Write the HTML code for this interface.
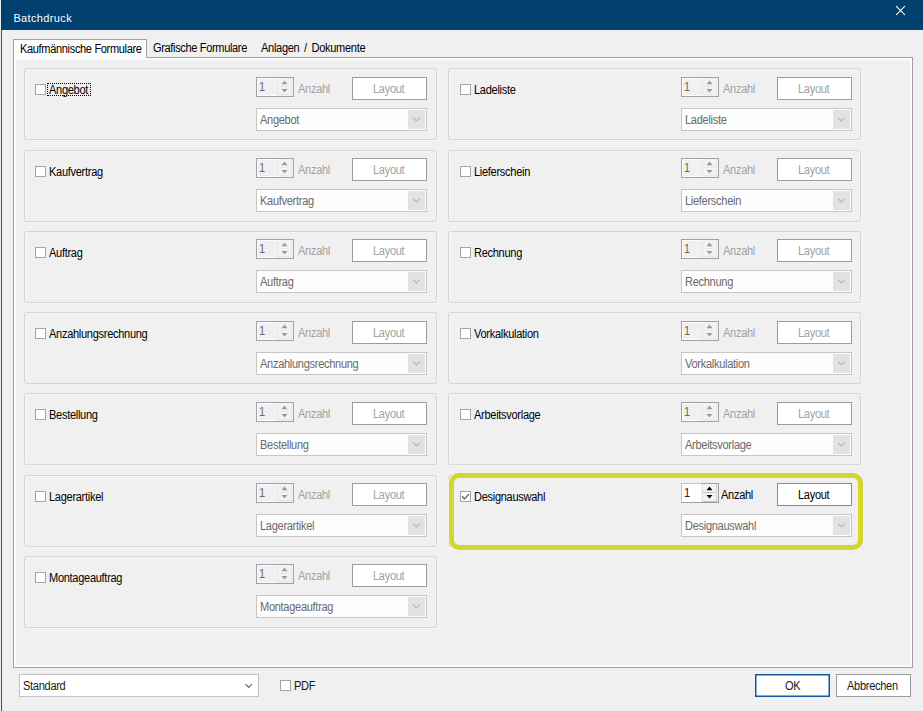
<!DOCTYPE html>
<html lang="de"><head><meta charset="utf-8"><title>Batchdruck</title>
<style>
html,body{margin:0;padding:0}
body{width:923px;height:711px;overflow:hidden;background:#f0f0f0;position:relative;font-family:"Liberation Sans",sans-serif;font-size:11px;color:#000}
div,span{box-sizing:border-box}
.a{position:absolute}
.t{position:absolute;white-space:nowrap;font-size:12px;line-height:14px;height:14px;transform:scaleX(.92);letter-spacing:-.32px;transform-origin:0 0}
.g{position:absolute;border:1px solid #d5d5d5;border-radius:2.5px;box-shadow:inset 1px 1px 0 #f5f5f5, 1px 1px 0 #f5f5f5}
.cb{position:absolute;width:11px;height:11px;border:1px solid #a4a4a4;background:#fff}
.btn{position:absolute;border:1px solid #9c9c9c;background:#fff}
.cmb{position:absolute;border:1px solid #c6c6c6;background:#fdfdfd}
.dd{position:absolute;background:#e2e2e2}
.sp{position:absolute;border:1px solid #a2a2a6;background:#f0f0f0}
.dis{color:#a2a2a2}
.dim{color:#6a6a6a}
</style></head>
<body>
<div class="a" style="left:0;top:0;width:1px;height:711px;background:#ececec"></div>
<div class="a" style="left:1px;top:0;width:1px;height:711px;background:#15609f"></div>
<div class="a" style="left:1px;top:0;width:922px;height:30px;background:#01406f"></div>
<span class="t" style="left:13.4px;top:11px;color:#fff;font-size:11px;transform:none;letter-spacing:.36px">Batchdruck</span>
<svg class="a" style="left:894px;top:4px" width="14" height="14" viewBox="0 0 14 14"><path d="M2.4 2.4 L10.6 10.6 M10.6 2.4 L2.4 10.6" stroke="#fff" stroke-width="1.05" stroke-linecap="round" fill="none"/></svg>
<div class="a" style="left:13px;top:57px;width:900px;height:611px;border:1px solid #a2a2a2;background:#f0f0f0;box-shadow:inset 0 0 0 2px #fcfcfc"></div>
<div class="a" style="left:13px;top:39px;width:134px;height:19px;border:1px solid #a2a2a2;border-bottom:none;background:#fdfdfd"></div>
<span class="t" style="left:19.5px;top:42px;letter-spacing:-.37px">Kaufmännische Formulare</span>
<span class="t" style="left:153px;top:41px;letter-spacing:-.38px">Grafische Formulare</span>
<span class="t" style="left:261px;top:41px;word-spacing:2px">Anlagen / Dokumente</span>
<div class="g" style="left:24px;top:68px;width:413px;height:72px"></div>
<div class="cb" style="left:35px;top:84px"></div>
<div class="a" style="left:47px;top:83px;width:44px;height:13px;border:1px dotted #000"></div>
<span class="t" style="left:49.2px;top:83px">Angebot</span>
<div class="sp" style="left:256px;top:77px;width:38px;height:20px;box-shadow:inset 0 0 0 1px #fcfcfc"></div>
<div class="a" style="left:277px;top:78px;width:16px;height:18px;background:#f0f0f0"></div>
<div class="a" style="left:277px;top:79px;width:15px;height:8px;border:1px solid #e8e8e8;border-top-color:#f4f4f4;background:#f2f2f2"></div>
<div class="a" style="left:277px;top:87px;width:15px;height:8px;border:1px solid #e8e8e8;border-top-color:#f4f4f4;background:#f2f2f2"></div>
<svg class="a" style="left:279px;top:78px" width="11" height="16" viewBox="0 0 11 16"><path d="M2.55 6.2 L5.5 2.5 L8.45 6.2 Z M2.55 10.9 L5.5 14.6 L8.45 10.9 Z" fill="#9a9a9a"/></svg>
<span class="t dim" style="left:259.2px;top:80px;">1</span>
<span class="t dis" style="left:298px;top:82px">Anzahl</span>
<div class="btn" style="left:352px;top:77px;width:75px;height:23px"></div>
<span class="t dis" style="left:373.3px;top:82px">Layout</span>
<div class="cmb" style="left:256px;top:108px;width:171px;height:23px"></div>
<div class="dd" style="left:408px;top:110px;width:17px;height:19px"></div>
<svg class="a" style="left:411px;top:115px" width="11" height="9" viewBox="0 0 11 9"><path d="M2 2.6 L5.4 6 L8.8 2.6" stroke="#b4b4b4" stroke-width="1.15" fill="none"/></svg>
<span class="t dim" style="left:260px;top:113px">Angebot</span>
<div class="g" style="left:24px;top:150px;width:413px;height:72px"></div>
<div class="cb" style="left:35px;top:166px"></div>
<span class="t" style="left:49.2px;top:165px">Kaufvertrag</span>
<div class="sp" style="left:256px;top:158px;width:38px;height:20px;box-shadow:inset 0 0 0 1px #fcfcfc"></div>
<div class="a" style="left:277px;top:159px;width:16px;height:18px;background:#f0f0f0"></div>
<div class="a" style="left:277px;top:160px;width:15px;height:8px;border:1px solid #e8e8e8;border-top-color:#f4f4f4;background:#f2f2f2"></div>
<div class="a" style="left:277px;top:168px;width:15px;height:8px;border:1px solid #e8e8e8;border-top-color:#f4f4f4;background:#f2f2f2"></div>
<svg class="a" style="left:279px;top:159px" width="11" height="16" viewBox="0 0 11 16"><path d="M2.55 6.2 L5.5 2.5 L8.45 6.2 Z M2.55 10.9 L5.5 14.6 L8.45 10.9 Z" fill="#9a9a9a"/></svg>
<span class="t dim" style="left:259.2px;top:161px;">1</span>
<span class="t dis" style="left:298px;top:163px">Anzahl</span>
<div class="btn" style="left:352px;top:158px;width:75px;height:23px"></div>
<span class="t dis" style="left:373.3px;top:163px">Layout</span>
<div class="cmb" style="left:256px;top:189px;width:171px;height:23px"></div>
<div class="dd" style="left:408px;top:191px;width:17px;height:19px"></div>
<svg class="a" style="left:411px;top:196px" width="11" height="9" viewBox="0 0 11 9"><path d="M2 2.6 L5.4 6 L8.8 2.6" stroke="#b4b4b4" stroke-width="1.15" fill="none"/></svg>
<span class="t dim" style="left:260px;top:194px">Kaufvertrag</span>
<div class="g" style="left:24px;top:231px;width:413px;height:72px"></div>
<div class="cb" style="left:35px;top:247px"></div>
<span class="t" style="left:49.2px;top:246px">Auftrag</span>
<div class="sp" style="left:256px;top:239px;width:38px;height:20px;box-shadow:inset 0 0 0 1px #fcfcfc"></div>
<div class="a" style="left:277px;top:240px;width:16px;height:18px;background:#f0f0f0"></div>
<div class="a" style="left:277px;top:241px;width:15px;height:8px;border:1px solid #e8e8e8;border-top-color:#f4f4f4;background:#f2f2f2"></div>
<div class="a" style="left:277px;top:249px;width:15px;height:8px;border:1px solid #e8e8e8;border-top-color:#f4f4f4;background:#f2f2f2"></div>
<svg class="a" style="left:279px;top:240px" width="11" height="16" viewBox="0 0 11 16"><path d="M2.55 6.2 L5.5 2.5 L8.45 6.2 Z M2.55 10.9 L5.5 14.6 L8.45 10.9 Z" fill="#9a9a9a"/></svg>
<span class="t dim" style="left:259.2px;top:242px;">1</span>
<span class="t dis" style="left:298px;top:244px">Anzahl</span>
<div class="btn" style="left:352px;top:239px;width:75px;height:23px"></div>
<span class="t dis" style="left:373.3px;top:244px">Layout</span>
<div class="cmb" style="left:256px;top:270px;width:171px;height:23px"></div>
<div class="dd" style="left:408px;top:272px;width:17px;height:19px"></div>
<svg class="a" style="left:411px;top:277px" width="11" height="9" viewBox="0 0 11 9"><path d="M2 2.6 L5.4 6 L8.8 2.6" stroke="#b4b4b4" stroke-width="1.15" fill="none"/></svg>
<span class="t dim" style="left:260px;top:275px">Auftrag</span>
<div class="g" style="left:24px;top:312px;width:413px;height:72px"></div>
<div class="cb" style="left:35px;top:328px"></div>
<span class="t" style="left:49.2px;top:327px">Anzahlungsrechnung</span>
<div class="sp" style="left:256px;top:321px;width:38px;height:20px;box-shadow:inset 0 0 0 1px #fcfcfc"></div>
<div class="a" style="left:277px;top:322px;width:16px;height:18px;background:#f0f0f0"></div>
<div class="a" style="left:277px;top:323px;width:15px;height:8px;border:1px solid #e8e8e8;border-top-color:#f4f4f4;background:#f2f2f2"></div>
<div class="a" style="left:277px;top:331px;width:15px;height:8px;border:1px solid #e8e8e8;border-top-color:#f4f4f4;background:#f2f2f2"></div>
<svg class="a" style="left:279px;top:322px" width="11" height="16" viewBox="0 0 11 16"><path d="M2.55 6.2 L5.5 2.5 L8.45 6.2 Z M2.55 10.9 L5.5 14.6 L8.45 10.9 Z" fill="#9a9a9a"/></svg>
<span class="t dim" style="left:259.2px;top:324px;">1</span>
<span class="t dis" style="left:298px;top:326px">Anzahl</span>
<div class="btn" style="left:352px;top:321px;width:75px;height:23px"></div>
<span class="t dis" style="left:373.3px;top:326px">Layout</span>
<div class="cmb" style="left:256px;top:352px;width:171px;height:23px"></div>
<div class="dd" style="left:408px;top:354px;width:17px;height:19px"></div>
<svg class="a" style="left:411px;top:359px" width="11" height="9" viewBox="0 0 11 9"><path d="M2 2.6 L5.4 6 L8.8 2.6" stroke="#b4b4b4" stroke-width="1.15" fill="none"/></svg>
<span class="t dim" style="left:260px;top:357px">Anzahlungsrechnung</span>
<div class="g" style="left:24px;top:393px;width:413px;height:72px"></div>
<div class="cb" style="left:35px;top:409px"></div>
<span class="t" style="left:49.2px;top:408px">Bestellung</span>
<div class="sp" style="left:256px;top:402px;width:38px;height:20px;box-shadow:inset 0 0 0 1px #fcfcfc"></div>
<div class="a" style="left:277px;top:403px;width:16px;height:18px;background:#f0f0f0"></div>
<div class="a" style="left:277px;top:404px;width:15px;height:8px;border:1px solid #e8e8e8;border-top-color:#f4f4f4;background:#f2f2f2"></div>
<div class="a" style="left:277px;top:412px;width:15px;height:8px;border:1px solid #e8e8e8;border-top-color:#f4f4f4;background:#f2f2f2"></div>
<svg class="a" style="left:279px;top:403px" width="11" height="16" viewBox="0 0 11 16"><path d="M2.55 6.2 L5.5 2.5 L8.45 6.2 Z M2.55 10.9 L5.5 14.6 L8.45 10.9 Z" fill="#9a9a9a"/></svg>
<span class="t dim" style="left:259.2px;top:405px;">1</span>
<span class="t dis" style="left:298px;top:407px">Anzahl</span>
<div class="btn" style="left:352px;top:402px;width:75px;height:23px"></div>
<span class="t dis" style="left:373.3px;top:407px">Layout</span>
<div class="cmb" style="left:256px;top:433px;width:171px;height:23px"></div>
<div class="dd" style="left:408px;top:435px;width:17px;height:19px"></div>
<svg class="a" style="left:411px;top:440px" width="11" height="9" viewBox="0 0 11 9"><path d="M2 2.6 L5.4 6 L8.8 2.6" stroke="#b4b4b4" stroke-width="1.15" fill="none"/></svg>
<span class="t dim" style="left:260px;top:438px">Bestellung</span>
<div class="g" style="left:24px;top:475px;width:413px;height:72px"></div>
<div class="cb" style="left:35px;top:491px"></div>
<span class="t" style="left:49.2px;top:490px">Lagerartikel</span>
<div class="sp" style="left:256px;top:483px;width:38px;height:20px;box-shadow:inset 0 0 0 1px #fcfcfc"></div>
<div class="a" style="left:277px;top:484px;width:16px;height:18px;background:#f0f0f0"></div>
<div class="a" style="left:277px;top:485px;width:15px;height:8px;border:1px solid #e8e8e8;border-top-color:#f4f4f4;background:#f2f2f2"></div>
<div class="a" style="left:277px;top:493px;width:15px;height:8px;border:1px solid #e8e8e8;border-top-color:#f4f4f4;background:#f2f2f2"></div>
<svg class="a" style="left:279px;top:484px" width="11" height="16" viewBox="0 0 11 16"><path d="M2.55 6.2 L5.5 2.5 L8.45 6.2 Z M2.55 10.9 L5.5 14.6 L8.45 10.9 Z" fill="#9a9a9a"/></svg>
<span class="t dim" style="left:259.2px;top:486px;">1</span>
<span class="t dis" style="left:298px;top:488px">Anzahl</span>
<div class="btn" style="left:352px;top:483px;width:75px;height:23px"></div>
<span class="t dis" style="left:373.3px;top:488px">Layout</span>
<div class="cmb" style="left:256px;top:514px;width:171px;height:23px"></div>
<div class="dd" style="left:408px;top:516px;width:17px;height:19px"></div>
<svg class="a" style="left:411px;top:521px" width="11" height="9" viewBox="0 0 11 9"><path d="M2 2.6 L5.4 6 L8.8 2.6" stroke="#b4b4b4" stroke-width="1.15" fill="none"/></svg>
<span class="t dim" style="left:260px;top:519px">Lagerartikel</span>
<div class="g" style="left:24px;top:556px;width:413px;height:72px"></div>
<div class="cb" style="left:35px;top:572px"></div>
<span class="t" style="left:49.2px;top:571px">Montageauftrag</span>
<div class="sp" style="left:256px;top:564px;width:38px;height:20px;box-shadow:inset 0 0 0 1px #fcfcfc"></div>
<div class="a" style="left:277px;top:565px;width:16px;height:18px;background:#f0f0f0"></div>
<div class="a" style="left:277px;top:566px;width:15px;height:8px;border:1px solid #e8e8e8;border-top-color:#f4f4f4;background:#f2f2f2"></div>
<div class="a" style="left:277px;top:574px;width:15px;height:8px;border:1px solid #e8e8e8;border-top-color:#f4f4f4;background:#f2f2f2"></div>
<svg class="a" style="left:279px;top:565px" width="11" height="16" viewBox="0 0 11 16"><path d="M2.55 6.2 L5.5 2.5 L8.45 6.2 Z M2.55 10.9 L5.5 14.6 L8.45 10.9 Z" fill="#9a9a9a"/></svg>
<span class="t dim" style="left:259.2px;top:567px;">1</span>
<span class="t dis" style="left:298px;top:569px">Anzahl</span>
<div class="btn" style="left:352px;top:564px;width:75px;height:23px"></div>
<span class="t dis" style="left:373.3px;top:569px">Layout</span>
<div class="cmb" style="left:256px;top:595px;width:171px;height:23px"></div>
<div class="dd" style="left:408px;top:597px;width:17px;height:19px"></div>
<svg class="a" style="left:411px;top:602px" width="11" height="9" viewBox="0 0 11 9"><path d="M2 2.6 L5.4 6 L8.8 2.6" stroke="#b4b4b4" stroke-width="1.15" fill="none"/></svg>
<span class="t dim" style="left:260px;top:600px">Montageauftrag</span>
<div class="g" style="left:448px;top:68px;width:413px;height:72px"></div>
<div class="cb" style="left:460px;top:84px"></div>
<span class="t" style="left:474.2px;top:83px">Ladeliste</span>
<div class="sp" style="left:681px;top:77px;width:38px;height:20px;box-shadow:inset 0 0 0 1px #fcfcfc"></div>
<div class="a" style="left:702px;top:78px;width:16px;height:18px;background:#f0f0f0"></div>
<div class="a" style="left:702px;top:79px;width:15px;height:8px;border:1px solid #e8e8e8;border-top-color:#f4f4f4;background:#f2f2f2"></div>
<div class="a" style="left:702px;top:87px;width:15px;height:8px;border:1px solid #e8e8e8;border-top-color:#f4f4f4;background:#f2f2f2"></div>
<svg class="a" style="left:704px;top:78px" width="11" height="16" viewBox="0 0 11 16"><path d="M2.55 6.2 L5.5 2.5 L8.45 6.2 Z M2.55 10.9 L5.5 14.6 L8.45 10.9 Z" fill="#9a9a9a"/></svg>
<span class="t dim" style="left:684.2px;top:80px;">1</span>
<span class="t dis" style="left:723px;top:82px">Anzahl</span>
<div class="btn" style="left:777px;top:77px;width:75px;height:23px"></div>
<span class="t dis" style="left:798.3px;top:82px">Layout</span>
<div class="cmb" style="left:681px;top:108px;width:171px;height:23px"></div>
<div class="dd" style="left:833px;top:110px;width:17px;height:19px"></div>
<svg class="a" style="left:836px;top:115px" width="11" height="9" viewBox="0 0 11 9"><path d="M2 2.6 L5.4 6 L8.8 2.6" stroke="#b4b4b4" stroke-width="1.15" fill="none"/></svg>
<span class="t dim" style="left:685px;top:113px">Ladeliste</span>
<div class="g" style="left:448px;top:150px;width:413px;height:72px"></div>
<div class="cb" style="left:460px;top:166px"></div>
<span class="t" style="left:474.2px;top:165px">Lieferschein</span>
<div class="sp" style="left:681px;top:158px;width:38px;height:20px;box-shadow:inset 0 0 0 1px #fcfcfc"></div>
<div class="a" style="left:702px;top:159px;width:16px;height:18px;background:#f0f0f0"></div>
<div class="a" style="left:702px;top:160px;width:15px;height:8px;border:1px solid #e8e8e8;border-top-color:#f4f4f4;background:#f2f2f2"></div>
<div class="a" style="left:702px;top:168px;width:15px;height:8px;border:1px solid #e8e8e8;border-top-color:#f4f4f4;background:#f2f2f2"></div>
<svg class="a" style="left:704px;top:159px" width="11" height="16" viewBox="0 0 11 16"><path d="M2.55 6.2 L5.5 2.5 L8.45 6.2 Z M2.55 10.9 L5.5 14.6 L8.45 10.9 Z" fill="#9a9a9a"/></svg>
<span class="t dim" style="left:684.2px;top:161px;">1</span>
<span class="t dis" style="left:723px;top:163px">Anzahl</span>
<div class="btn" style="left:777px;top:158px;width:75px;height:23px"></div>
<span class="t dis" style="left:798.3px;top:163px">Layout</span>
<div class="cmb" style="left:681px;top:189px;width:171px;height:23px"></div>
<div class="dd" style="left:833px;top:191px;width:17px;height:19px"></div>
<svg class="a" style="left:836px;top:196px" width="11" height="9" viewBox="0 0 11 9"><path d="M2 2.6 L5.4 6 L8.8 2.6" stroke="#b4b4b4" stroke-width="1.15" fill="none"/></svg>
<span class="t dim" style="left:685px;top:194px">Lieferschein</span>
<div class="g" style="left:448px;top:231px;width:413px;height:72px"></div>
<div class="cb" style="left:460px;top:247px"></div>
<span class="t" style="left:474.2px;top:246px">Rechnung</span>
<div class="sp" style="left:681px;top:239px;width:38px;height:20px;box-shadow:inset 0 0 0 1px #fcfcfc"></div>
<div class="a" style="left:702px;top:240px;width:16px;height:18px;background:#f0f0f0"></div>
<div class="a" style="left:702px;top:241px;width:15px;height:8px;border:1px solid #e8e8e8;border-top-color:#f4f4f4;background:#f2f2f2"></div>
<div class="a" style="left:702px;top:249px;width:15px;height:8px;border:1px solid #e8e8e8;border-top-color:#f4f4f4;background:#f2f2f2"></div>
<svg class="a" style="left:704px;top:240px" width="11" height="16" viewBox="0 0 11 16"><path d="M2.55 6.2 L5.5 2.5 L8.45 6.2 Z M2.55 10.9 L5.5 14.6 L8.45 10.9 Z" fill="#9a9a9a"/></svg>
<span class="t dim" style="left:684.2px;top:242px;">1</span>
<span class="t dis" style="left:723px;top:244px">Anzahl</span>
<div class="btn" style="left:777px;top:239px;width:75px;height:23px"></div>
<span class="t dis" style="left:798.3px;top:244px">Layout</span>
<div class="cmb" style="left:681px;top:270px;width:171px;height:23px"></div>
<div class="dd" style="left:833px;top:272px;width:17px;height:19px"></div>
<svg class="a" style="left:836px;top:277px" width="11" height="9" viewBox="0 0 11 9"><path d="M2 2.6 L5.4 6 L8.8 2.6" stroke="#b4b4b4" stroke-width="1.15" fill="none"/></svg>
<span class="t dim" style="left:685px;top:275px">Rechnung</span>
<div class="g" style="left:448px;top:312px;width:413px;height:72px"></div>
<div class="cb" style="left:460px;top:328px"></div>
<span class="t" style="left:474.2px;top:327px">Vorkalkulation</span>
<div class="sp" style="left:681px;top:321px;width:38px;height:20px;box-shadow:inset 0 0 0 1px #fcfcfc"></div>
<div class="a" style="left:702px;top:322px;width:16px;height:18px;background:#f0f0f0"></div>
<div class="a" style="left:702px;top:323px;width:15px;height:8px;border:1px solid #e8e8e8;border-top-color:#f4f4f4;background:#f2f2f2"></div>
<div class="a" style="left:702px;top:331px;width:15px;height:8px;border:1px solid #e8e8e8;border-top-color:#f4f4f4;background:#f2f2f2"></div>
<svg class="a" style="left:704px;top:322px" width="11" height="16" viewBox="0 0 11 16"><path d="M2.55 6.2 L5.5 2.5 L8.45 6.2 Z M2.55 10.9 L5.5 14.6 L8.45 10.9 Z" fill="#9a9a9a"/></svg>
<span class="t dim" style="left:684.2px;top:324px;">1</span>
<span class="t dis" style="left:723px;top:326px">Anzahl</span>
<div class="btn" style="left:777px;top:321px;width:75px;height:23px"></div>
<span class="t dis" style="left:798.3px;top:326px">Layout</span>
<div class="cmb" style="left:681px;top:352px;width:171px;height:23px"></div>
<div class="dd" style="left:833px;top:354px;width:17px;height:19px"></div>
<svg class="a" style="left:836px;top:359px" width="11" height="9" viewBox="0 0 11 9"><path d="M2 2.6 L5.4 6 L8.8 2.6" stroke="#b4b4b4" stroke-width="1.15" fill="none"/></svg>
<span class="t dim" style="left:685px;top:357px">Vorkalkulation</span>
<div class="g" style="left:448px;top:393px;width:413px;height:72px"></div>
<div class="cb" style="left:460px;top:409px"></div>
<span class="t" style="left:474.2px;top:408px">Arbeitsvorlage</span>
<div class="sp" style="left:681px;top:402px;width:38px;height:20px;box-shadow:inset 0 0 0 1px #fcfcfc"></div>
<div class="a" style="left:702px;top:403px;width:16px;height:18px;background:#f0f0f0"></div>
<div class="a" style="left:702px;top:404px;width:15px;height:8px;border:1px solid #e8e8e8;border-top-color:#f4f4f4;background:#f2f2f2"></div>
<div class="a" style="left:702px;top:412px;width:15px;height:8px;border:1px solid #e8e8e8;border-top-color:#f4f4f4;background:#f2f2f2"></div>
<svg class="a" style="left:704px;top:403px" width="11" height="16" viewBox="0 0 11 16"><path d="M2.55 6.2 L5.5 2.5 L8.45 6.2 Z M2.55 10.9 L5.5 14.6 L8.45 10.9 Z" fill="#9a9a9a"/></svg>
<span class="t dim" style="left:684.2px;top:405px;">1</span>
<span class="t dis" style="left:723px;top:407px">Anzahl</span>
<div class="btn" style="left:777px;top:402px;width:75px;height:23px"></div>
<span class="t dis" style="left:798.3px;top:407px">Layout</span>
<div class="cmb" style="left:681px;top:433px;width:171px;height:23px"></div>
<div class="dd" style="left:833px;top:435px;width:17px;height:19px"></div>
<svg class="a" style="left:836px;top:440px" width="11" height="9" viewBox="0 0 11 9"><path d="M2 2.6 L5.4 6 L8.8 2.6" stroke="#b4b4b4" stroke-width="1.15" fill="none"/></svg>
<span class="t dim" style="left:685px;top:438px">Arbeitsvorlage</span>
<div class="g" style="left:448px;top:475px;width:413px;height:72px"></div>
<div class="cb" style="left:460px;top:491px"><svg class="a" style="left:0;top:0" width="9" height="9" viewBox="0 0 9 9"><path d="M1.4 4.5 L3.4 7 L7.6 2.5" stroke="#6c6c6c" stroke-width="1.35" stroke-linecap="round" stroke-linejoin="round" fill="none"/></svg></div>
<span class="t" style="left:474.2px;top:490px">Designauswahl</span>
<div class="sp" style="left:681px;top:483px;width:38px;height:20px;background:#fff;border-color:#c6c8ce #9c9eaa #9c9eaa #c6c8ce"></div>
<div class="a" style="left:701px;top:483px;width:18px;height:20px;border:1px solid #9c9eaa;border-left:none;background:#f0f0f0"></div>
<div class="a" style="left:702px;top:484px;width:15px;height:9px;border:1px solid;border-color:#f6f6f6 #d2d2d2 #c4c4c4 #e8e8e8;background:#f3f3f3"></div>
<div class="a" style="left:702px;top:493px;width:15px;height:9px;border:1px solid;border-color:#f6f6f6 #d2d2d2 #c4c4c4 #e8e8e8;background:#f3f3f3"></div>
<svg class="a" style="left:704px;top:484px" width="11" height="16" viewBox="0 0 11 16"><path d="M2.55 6.2 L5.5 2.5 L8.45 6.2 Z M2.55 10.9 L5.5 14.6 L8.45 10.9 Z" fill="#000"/></svg>
<span class="t" style="left:684.2px;top:486px;color:#222">1</span>
<span class="t" style="left:721.4px;top:488px">Anzahl</span>
<div class="btn" style="left:777px;top:483px;width:75px;height:23px;border-color:#8a8a8a"></div>
<span class="t" style="left:798.3px;top:488px">Layout</span>
<div class="cmb" style="left:681px;top:514px;width:171px;height:23px"></div>
<div class="dd" style="left:833px;top:516px;width:17px;height:19px"></div>
<svg class="a" style="left:836px;top:521px" width="11" height="9" viewBox="0 0 11 9"><path d="M2 2.6 L5.4 6 L8.8 2.6" stroke="#b4b4b4" stroke-width="1.15" fill="none"/></svg>
<span class="t dim" style="left:685px;top:519px">Designauswahl</span>
<div class="a" style="left:449px;top:473px;width:414px;height:77px;border:5px solid #d2d829;border-radius:10px;box-shadow:0 0 0 1px #f1f1f8,inset 0 0 0 1px #f1f1f8"></div>
<div class="cmb" style="left:19px;top:674px;width:240px;height:23px;border-color:#c2c2c2;background:#fff"></div>
<span class="t" style="left:23px;top:678.6px;color:#1a1a1a">Standard</span>
<svg class="a" style="left:243px;top:682px" width="12" height="8" viewBox="0 0 12 8"><path d="M2.5 2.2 L5.7 5.4 L8.9 2.2" stroke="#606060" stroke-width="1.1" fill="none"/></svg>
<div class="cb" style="left:280px;top:680px"></div>
<span class="t" style="left:294px;top:678.6px;color:#1a1a1a">PDF</span>
<div class="btn" style="left:755px;top:674px;width:75px;height:23px;border-color:#0f5a9e;box-shadow:inset 0 0 0 0.5px #0f5a9e"></div>
<span class="t" style="left:784.5px;top:678.5px;color:#1a1a1a">OK</span>
<div class="btn" style="left:836px;top:674px;width:75px;height:23px"></div>
<span class="t" style="left:846.8px;top:678.5px;color:#1a1a1a">Abbrechen</span>
</body></html>
